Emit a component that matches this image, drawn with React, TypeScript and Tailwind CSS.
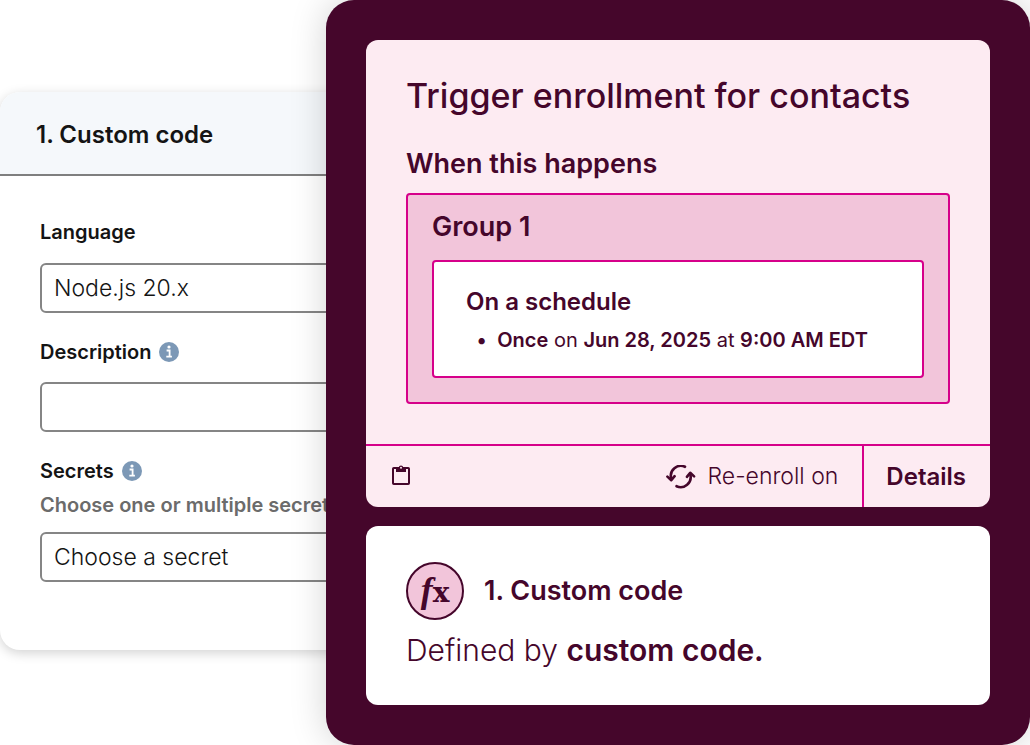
import React, { useState } from 'react';

const InfoIcon: React.FC = () => (
  <svg viewBox="0 0 20 20" className="h-5 w-5 shrink-0" aria-hidden="true">
    <circle cx="10" cy="10" r="10" fill="#7c98b6" />
    <circle cx="10" cy="5" r="1.6" fill="#fff" />
    <path d="M7.6 8.5h3v6M7.3 14.7h5.6" fill="none" stroke="#fff" strokeWidth="1.8" />
  </svg>
);

const ClipboardIcon: React.FC = () => (
  <svg viewBox="0 0 18 20" className="h-5 w-[18px]" aria-hidden="true">
    <rect x="1" y="3" width="16" height="16" rx="0.8" fill="none" stroke="#45062b" strokeWidth="2" />
    <path d="M4 2.4h2.6a2.5 2.5 0 0 1 4.8 0H14V7H4z" fill="#45062b" />
    <circle cx="9" cy="2.8" r="1" fill="#fdebf2" />
  </svg>
);

const ReenrollIcon: React.FC = () => (
  <svg viewBox="0 0 30 24" className="h-6 w-[30px]" aria-hidden="true">
    <g fill="none" stroke="#45062b" strokeWidth="2.6" strokeLinecap="round" strokeLinejoin="round">
      <path d="M19 1.8A10 10 0 0 0 5.2 13.5" />
      <path d="M10.500 21.2A10 10 0 0 0 24.300 9.500" />
      <path d="M1.400 11.600l3.900 3.600 3.300-4" />
      <path d="M20.900 11.800l3.300-4 3.900 3.600" />
    </g>
  </svg>
);

const fieldClass =
  'block h-[50px] w-full appearance-none rounded-md border-2 border-[#858585] bg-white px-3 text-[23px] font-light text-[#141414]';

const CodePanel: React.FC = () => {
  const [language, setLanguage] = useState('node20');
  const [description, setDescription] = useState('');
  const [secret, setSecret] = useState('');

  return (
    <section className="mt-[92px] w-2/5 shrink-0 self-start overflow-hidden rounded-[20px] bg-white text-[#141414] shadow-[0_3px_12px_rgba(0,0,0,0.18)]">
      <header className="border-b-2 border-[#7f7f7f] bg-[#f5f8fb] px-9 pt-[27px] pb-[23px]">
        <h2 className="text-2xl font-semibold">1. Custom code</h2>
      </header>
      <form className="px-10 pt-[42px] pb-[68px]">
        <label htmlFor="language" className="mb-[17px] block text-xl font-semibold">
          Language
        </label>
        <select id="language" value={language} onChange={(e) => setLanguage(e.target.value)} className={fieldClass}>
          <option value="node20">Node.js 20.x</option>
        </select>

        <div className="mt-[25px] mb-4 flex items-center gap-2">
          <label htmlFor="description" className="text-xl font-semibold">
            Description
          </label>
          <InfoIcon />
        </div>
        <input
          id="description"
          type="text"
          value={description}
          onChange={(e) => setDescription(e.target.value)}
          className={fieldClass}
        />

        <div className="mt-[25px] flex items-center gap-2">
          <label htmlFor="secret" className="text-xl font-semibold">
            Secrets
          </label>
          <InfoIcon />
        </div>
        <p className="mt-1.5 mb-[13px] text-xl font-semibold whitespace-nowrap text-[#6b6b6b]">
          Choose one or multiple secrets
        </p>
        <select id="secret" value={secret} onChange={(e) => setSecret(e.target.value)} className={fieldClass}>
          <option value="">Choose a secret</option>
        </select>
      </form>
    </section>
  );
};

const TriggerCard: React.FC = () => (
  <article className="overflow-hidden rounded-xl bg-[#fdebf2]">
    <div className="px-10 pt-9 pb-10">
      <h1 className="text-[34px] leading-10 font-medium whitespace-nowrap">Trigger enrollment for contacts</h1>
      <h2 className="mt-8 text-[27px] leading-8 font-semibold">When this happens</h2>
      <div className="mt-[13px] rounded border-2 border-[#d6008a] bg-[#f2c5da] px-6 pt-4 pb-6">
        <h3 className="text-[27px] leading-8 font-semibold">Group 1</h3>
        <div className="mt-[17px] rounded border-2 border-[#d6008a] bg-white px-8 pt-6 pb-[22px]">
          <h4 className="text-2xl font-semibold">On a schedule</h4>
          <ul className="mt-2 text-xl whitespace-nowrap">
            <li className="flex gap-2.5">
              <span className="pl-2.5">•</span>
              <span>
                <b className="font-semibold">Once</b> on <b className="font-semibold">Jun 28, 2025</b> at{' '}
                <b className="font-semibold">9:00 AM EDT</b>
              </span>
            </li>
          </ul>
        </div>
      </div>
    </div>
    <footer className="flex h-[63px] items-stretch border-t-2 border-[#d6008a]">
      <button type="button" aria-label="Copy" className="px-[26px] pb-1">
        <ClipboardIcon />
      </button>
      <button type="button" className="ml-auto flex items-center gap-3 pr-6 text-[23px] font-light">
        <ReenrollIcon />
        Re-enroll on
      </button>
      <button type="button" className="border-l-2 border-[#d6008a] pr-6 pl-[22px] text-2xl font-semibold">
        Details
      </button>
    </footer>
  </article>
);

const ActionCard: React.FC = () => (
  <article className="rounded-xl bg-white px-10 pt-9 pb-[35px]">
    <div className="flex items-center gap-5">
      <div className="flex h-[58px] w-[58px] shrink-0 items-center justify-center rounded-full border-2 border-[#45062b] bg-[#f2c5da]">
        <div className="flex items-baseline leading-8 font-bold">
          <span className="font-['Liberation_Serif',serif] text-[36px] italic">f</span>
          <span className="font-['DejaVu_Serif',serif] text-[28px]">x</span>
        </div>
      </div>
      <h2 className="text-[27px] leading-8 font-semibold">1. Custom code</h2>
    </div>
    <p className="mt-2.5 text-3xl leading-10 font-light">
      Defined by <b className="font-semibold">custom code.</b>
    </p>
  </article>
);

const App: React.FC = () => {
  return (
    <div className="flex min-h-screen bg-white font-['Inter',sans-serif]">
      <CodePanel />
      <main className="relative -ml-[86px] flex flex-1 flex-col gap-[19px] rounded-[28px] bg-[#45062b] p-10 text-[#45062b] shadow-[0_0_36px_rgba(0,0,0,0.18)]">
        <TriggerCard />
        <ActionCard />
      </main>
    </div>
  );
};

export default App;
